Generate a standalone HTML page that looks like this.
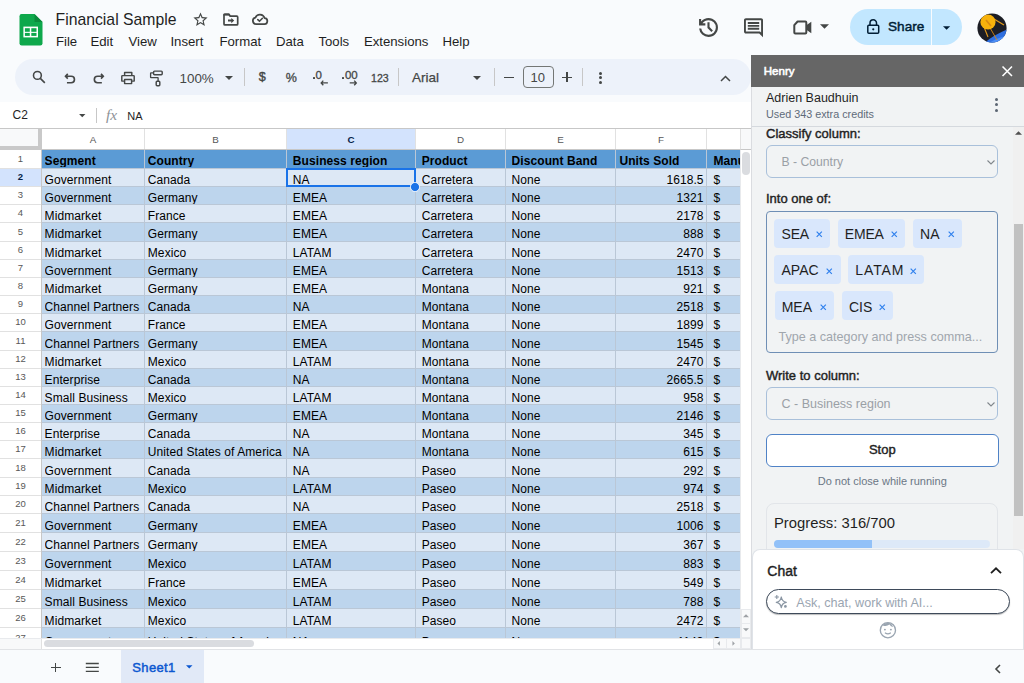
<!DOCTYPE html><html><head><meta charset="utf-8"><style>
*{box-sizing:border-box}
html,body{margin:0;padding:0}
body{width:1024px;height:683px;overflow:hidden;position:relative;background:#f9fbfd;font-family:"Liberation Sans",sans-serif;color:#1f1f1f}
.a{position:absolute;white-space:nowrap}
.t{position:absolute;white-space:nowrap;line-height:1}
svg{position:absolute;overflow:visible}
</style></head><body>
<svg style="left:19px;top:14px" width="24" height="32" viewBox="0 0 24 32">
<path d="M2.5 0H15.5L23.5 8V29.3Q23.5 31.5 21.3 31.5H2.7Q0.5 31.5 0.5 29.3V2.2Q0.5 0 2.5 0Z" fill="#0ea84c"/>
<path d="M15.5 0L23.5 8H15.5Z" fill="#0b8a3c"/>
<rect x="4.4" y="12.6" width="14.6" height="10.8" fill="#fff"/>
<rect x="5.9" y="14.2" width="4.9" height="3.6" fill="#0ea84c"/><rect x="12.3" y="14.2" width="5.2" height="3.6" fill="#0ea84c"/>
<rect x="5.9" y="18.9" width="4.9" height="3.0" fill="#0ea84c"/><rect x="12.3" y="18.9" width="5.2" height="3.0" fill="#0ea84c"/>
</svg><div class="t" style="left:55.6px;top:11.6px;font-size:15.75px;color:#1f1f1f">Financial Sample</div><svg style="left:192.4px;top:11.3px" width="17" height="17" viewBox="0 0 24 24"><path fill="#444746" d="M22 9.24l-7.19-.62L12 2 9.19 8.63 2 9.24l5.46 4.73L5.82 21 12 17.27 18.18 21l-1.63-7.03L22 9.24zM12 15.4l-3.76 2.27 1-4.28-3.32-2.88 4.38-.38L12 6.1l1.71 4.04 4.38.38-3.32 2.88 1 4.28L12 15.4z"/></svg><svg style="left:220px;top:10px" width="22" height="18" viewBox="220 10 22 18"><path fill="none" stroke="#444746" stroke-width="1.7" stroke-linejoin="round" d="M224 15.2V23.9Q224 24.9 225 24.9H236.8Q237.7 24.9 237.7 23.9V17.2Q237.7 16.2 236.8 16.2H230.2L228.8 14.3H225Q224 14.3 224 15.2Z"/><path fill="#444746" d="M223.3 14.5Q223.3 13.5 224.3 13.5H229.2L230.8 15.4H223.3Z"/><path fill="#444746" d="M228 19.6H231.3V17.9L234.2 20.6L231.3 23.3V21.6H228Z"/></svg><svg style="left:250px;top:10px" width="20" height="18" viewBox="250 10 20 18"><path fill="none" stroke="#444746" stroke-width="1.75" stroke-linejoin="round" d="M256 24.1H264A3 3 0 0 0 264.6 18.1A4.9 4.9 0 0 0 255.4 17.6A3.3 3.3 0 0 0 256 24.1Z"/><path fill="none" stroke="#444746" stroke-width="1.6" d="M257.8 19.6L259.5 21.2L262.4 18.3" stroke-linecap="round"/></svg><div class="t" style="left:55.9px;top:34.6px;font-size:13.2px;color:#1f1f1f">File</div><div class="t" style="left:90.4px;top:34.6px;font-size:13.2px;color:#1f1f1f">Edit</div><div class="t" style="left:128.4px;top:34.6px;font-size:13.2px;color:#1f1f1f">View</div><div class="t" style="left:170.4px;top:34.6px;font-size:13.2px;color:#1f1f1f">Insert</div><div class="t" style="left:219.4px;top:34.6px;font-size:13.2px;color:#1f1f1f">Format</div><div class="t" style="left:275.9px;top:34.6px;font-size:13.2px;color:#1f1f1f">Data</div><div class="t" style="left:318.4px;top:34.6px;font-size:13.2px;color:#1f1f1f">Tools</div><div class="t" style="left:363.9px;top:34.6px;font-size:13.2px;color:#1f1f1f">Extensions</div><div class="t" style="left:442.4px;top:34.6px;font-size:13.2px;color:#1f1f1f">Help</div><svg style="left:697.6px;top:16.5px" width="21" height="21" viewBox="80 -880 800 800"><path fill="#444746" d="M480-120q-138 0-240.5-91.5T122-440h82q14 104 92.5 172T480-200q117 0 198.5-81.5T760-480q0-117-81.5-198.5T480-760q-69 0-129 32t-101 88h110v80H120v-240h80v94q51-64 124.5-99T480-840q75 0 140.5 28.5t114 77q48.5 48.5 77 114T840-480q0 75-28.5 140.5t-77 114q-48.5 48.5-114 77T480-120Zm112-192L440-464v-216h80v184l128 128-56 56Z"/></svg><svg style="left:743.8px;top:18px" width="19" height="19.5" viewBox="80 -880 800 800"><path fill="#444746" d="M240-400h480v-80H240v80Zm0-120h480v-80H240v80Zm0-120h480v-80H240v80ZM880-80 720-240H160q-33 0-56.5-23.5T80-320v-480q0-33 23.5-56.5T160-880h640q33 0 56.5 23.5T880-800v720ZM160-320h594l46 45v-525H160v480Zm0 0v-480 480Z"/></svg><svg style="left:793px;top:20px" width="19" height="15" viewBox="0 0 19 15"><path fill="none" stroke="#444746" stroke-width="2" stroke-linejoin="round" d="M1.3 5.2L4.6 1.5H12.3Q13.3 1.5 13.3 2.5V12.5Q13.3 13.5 12.3 13.5H2.3Q1.3 13.5 1.3 12.5Z"/><path fill="#444746" d="M13 5.5L18.3 1.8V13.2L13 9.5Z"/></svg><svg style="left:820px;top:24px" width="9" height="5" viewBox="0 0 10 5"><path fill="#444746" d="M0 0H10L5 5Z"/></svg><div class="a" style="left:849.5px;top:9.4px;width:112px;height:36px;border-radius:18px;background:#c2e7ff"></div><div class="a" style="left:930.8px;top:9.4px;width:1px;height:36px;background:#f9fbfd"></div><svg style="left:866.5px;top:19px" width="12.5" height="15" viewBox="0 0 12.5 15"><rect x="0.8" y="6.3" width="10.9" height="8" rx="1" fill="none" stroke="#001d35" stroke-width="1.5"/><path fill="none" stroke="#001d35" stroke-width="1.5" d="M3 6.3V4A3.25 3.25 0 0 1 9.5 4V6.3"/><circle cx="6.25" cy="10.3" r="1.1" fill="#001d35"/></svg><div class="t" style="left:888px;top:20.3px;font-size:13.6px;font-weight:400;-webkit-text-stroke:0.45px #001d35;color:#001d35">Share</div><svg style="left:943.2px;top:26px" width="7.2" height="4" viewBox="0 0 10 5"><path fill="#001d35" d="M0 0H10L5 5Z"/></svg><svg style="left:976.5px;top:12.5px" width="30" height="30" viewBox="0 0 30 30">
<defs><clipPath id="av"><circle cx="15" cy="15" r="14.6"/></clipPath></defs>
<g clip-path="url(#av)"><rect width="30" height="30" fill="#1c1d24"/>
<path d="M6 31Q16 22 31 16V31Z" fill="#2f6fe0"/><path d="M10 31Q20 25 31 22V31Z" fill="#4d8ef5"/><path d="M15 31Q22 28 31 27V31Z" fill="#1fa84a"/>
<path d="M12 13L20 27" stroke="#d98a12" stroke-width="0.9"/><path d="M7 14L11 24" stroke="#e39a1a" stroke-width="1.1"/><path d="M17 6L27 12" stroke="#e39a1a" stroke-width="1.3"/>
<circle cx="11" cy="9" r="7.6" fill="#f7b20c"/><path d="M9 7L14 13" stroke="#d98a12" stroke-width="1.6"/></g></svg><div class="a" style="left:15px;top:59px;width:735.5px;height:36px;border-radius:18px;background:#edf2fa"></div><svg style="left:30.6px;top:68.8px" width="16.2" height="16.2" viewBox="0 0 24 24"><circle cx="9.5" cy="9.5" r="5.8" fill="none" stroke="#444746" stroke-width="2.3"/><path d="M13.8 13.8L20.5 20.5" stroke="#444746" stroke-width="2.4"/></svg><svg style="left:64px;top:73.2px" width="11.8" height="11" viewBox="0 0 14 13"><path fill="none" stroke="#444746" stroke-width="1.95" d="M4.5 1L1.8 3.8L4.5 6.6M2 3.8H8.5A3.9 3.9 0 0 1 8.5 11.6H3.5"/></svg><svg style="left:92.8px;top:73.2px" width="11.8" height="11" viewBox="0 0 14 13"><path fill="none" stroke="#444746" stroke-width="1.95" d="M9.5 1L12.2 3.8L9.5 6.6M12 3.8H5.5A3.9 3.9 0 0 0 5.5 11.6H10.5"/></svg><svg style="left:110px;top:62px" width="60" height="30" viewBox="110 62 60 30"><path fill="none" stroke="#444746" stroke-width="1.45" stroke-linejoin="round" d="M124.6 75.6V72.5H131.8V75.6M124.3 81.1H121.8V76.3Q121.8 75.6 122.5 75.6H133.5Q134.2 75.6 134.2 76.3V81.1H131.7M124.6 79.5H131.6V83.6H124.6Z"/>
<rect x="153.6" y="71.1" width="8.6" height="3.6" rx="0.9" fill="none" stroke="#444746" stroke-width="1.45"/><path fill="none" stroke="#444746" stroke-width="1.3" stroke-linejoin="round" d="M153.6 72.9H151Q150.6 72.9 150.6 73.3V77.2Q150.6 77.6 151 77.6H157.8Q158.1 77.6 158.1 77.9V81.1"/><rect x="156.2" y="81.3" width="3.6" height="4.4" rx="0.9" fill="none" stroke="#444746" stroke-width="1.45"/></svg><div class="t" style="left:179.5px;top:71.5px;font-size:13.4px;color:#444746">100%</div><svg style="left:224.5px;top:75.5px" width="8" height="4" viewBox="0 0 10 5"><path fill="#444746" d="M0 0H10L5 5Z"/></svg><div class="a" style="left:244.4px;top:68px;width:1px;height:18px;background:#c7c7c7"></div><div class="t" style="left:258.8px;top:70.5px;font-size:12.6px;-webkit-text-stroke:0.4px #444746;color:#444746">$</div><div class="t" style="left:285.8px;top:72.3px;font-size:12.5px;-webkit-text-stroke:0.3px #444746;color:#444746">%</div><div class="a" style="left:313.1px;top:77.1px;width:1.8px;height:1.9px;border-radius:0.5px;background:#444746"></div><div class="t" style="left:315.6px;top:70.3px;font-size:11.5px;-webkit-text-stroke:0.3px #444746;color:#444746">0</div><svg style="left:320px;top:79.6px" width="9" height="6" viewBox="0 0 9 6"><path fill="none" stroke="#444746" stroke-width="1.35" d="M3.3 0.6L1.2 2.9L3.3 5.2M1.4 2.9H7.9"/></svg><div class="a" style="left:342px;top:77.1px;width:1.8px;height:1.9px;border-radius:0.5px;background:#444746"></div><div class="t" style="left:344.9px;top:70.3px;font-size:11.5px;-webkit-text-stroke:0.3px #444746;color:#444746">00</div><svg style="left:348.8px;top:79.6px" width="9" height="6" viewBox="0 0 9 6"><path fill="none" stroke="#444746" stroke-width="1.35" d="M5.2 0.6L7.3 2.9L5.2 5.2M0.7 2.9H7.1"/></svg><div class="t" style="left:371px;top:72.6px;font-size:10.6px;-webkit-text-stroke:0.3px #444746;color:#444746">123</div><div class="a" style="left:397.6px;top:68px;width:1px;height:18px;background:#c7c7c7"></div><div class="t" style="left:412px;top:70.5px;font-size:13.5px;-webkit-text-stroke:0.25px #444746;color:#444746">Arial</div><svg style="left:472.5px;top:75.5px" width="8" height="4" viewBox="0 0 10 5"><path fill="#444746" d="M0 0H10L5 5Z"/></svg><div class="a" style="left:493.8px;top:68px;width:1px;height:18px;background:#c7c7c7"></div><div class="a" style="left:503.5px;top:76.5px;width:10px;height:1.6px;background:#444746"></div><div class="a" style="left:523px;top:66.4px;width:30.7px;height:21.6px;border:1px solid #747775;border-radius:4px"></div><div class="t" style="left:530.5px;top:70.6px;font-size:13px;color:#444746">10</div><div class="a" style="left:561.8px;top:76.5px;width:10px;height:1.6px;background:#444746"></div><div class="a" style="left:566px;top:72.3px;width:1.6px;height:10px;background:#444746"></div><div class="a" style="left:581.8px;top:68px;width:1px;height:18px;background:#c7c7c7"></div><div class="a" style="left:598.8px;top:71.9px;width:3px;height:3px;border-radius:50%;background:#444746"></div><div class="a" style="left:598.8px;top:76.4px;width:3px;height:3px;border-radius:50%;background:#444746"></div><div class="a" style="left:598.8px;top:80.9px;width:3px;height:3px;border-radius:50%;background:#444746"></div><svg style="left:720px;top:74.6px" width="11" height="7" viewBox="0 0 11 7"><path fill="none" stroke="#444746" stroke-width="1.5" d="M1 6L5.5 1.5L10 6"/></svg><div class="a" style="left:0;top:102px;width:751px;height:26.5px;background:#fff"></div><div class="t" style="left:12.5px;top:109.3px;font-size:12px;color:#1f1f1f">C2</div><svg style="left:78.8px;top:113.5px" width="6.5" height="3.2" viewBox="0 0 10 5"><path fill="#444746" d="M0 0H10L5 5Z"/></svg><div class="a" style="left:96.3px;top:108px;width:1px;height:15px;background:#c7c7c7"></div><div class="t" style="left:106px;top:107.3px;font-size:15.5px;font-style:italic;font-family:'Liberation Serif';color:#8e9398">fx</div><div class="t" style="left:127.3px;top:110.8px;font-size:11px;color:#1f1f1f">NA</div><div class="a" style="left:0;top:128.4px;width:751px;height:520.6px;background:#fff;overflow:hidden"><div class="a" style="left:0;top:0;width:751px;height:1px;background:#c7c7c7"></div><div class="a" style="left:0;top:740.2px;width:0;height:0"></div><div class="a" style="left:0;top:0;width:740.2px;height:509.3px;overflow:hidden"><div class="a" style="left:42px;top:1px;width:102px;height:19.6px;background:#fff"></div><div class="a" style="left:144px;top:1px;width:1px;height:19.6px;background:#e1e1e1"></div><div class="t" style="left:42px;width:102px;text-align:center;top:6.9px;font-size:9.8px;font-weight:400;color:#575757">A</div><div class="a" style="left:145px;top:1px;width:141px;height:19.6px;background:#fff"></div><div class="a" style="left:286px;top:1px;width:1px;height:19.6px;background:#e1e1e1"></div><div class="t" style="left:145px;width:141px;text-align:center;top:6.9px;font-size:9.8px;font-weight:400;color:#575757">B</div><div class="a" style="left:287px;top:1px;width:128px;height:19.6px;background:#d3e3fd"></div><div class="a" style="left:415px;top:1px;width:1px;height:19.6px;background:#e1e1e1"></div><div class="t" style="left:287px;width:128px;text-align:center;top:6.9px;font-size:9.8px;font-weight:700;color:#041e49">C</div><div class="a" style="left:416px;top:1px;width:89px;height:19.6px;background:#fff"></div><div class="a" style="left:505px;top:1px;width:1px;height:19.6px;background:#e1e1e1"></div><div class="t" style="left:416px;width:89px;text-align:center;top:6.9px;font-size:9.8px;font-weight:400;color:#575757">D</div><div class="a" style="left:506px;top:1px;width:109px;height:19.6px;background:#fff"></div><div class="a" style="left:615px;top:1px;width:1px;height:19.6px;background:#e1e1e1"></div><div class="t" style="left:506px;width:109px;text-align:center;top:6.9px;font-size:9.8px;font-weight:400;color:#575757">E</div><div class="a" style="left:616px;top:1px;width:90px;height:19.6px;background:#fff"></div><div class="a" style="left:706px;top:1px;width:1px;height:19.6px;background:#e1e1e1"></div><div class="t" style="left:616px;width:90px;text-align:center;top:6.9px;font-size:9.8px;font-weight:400;color:#575757">F</div><div class="a" style="left:707px;top:1px;width:193px;height:19.6px;background:#fff"></div><div class="a" style="left:900px;top:1px;width:1px;height:19.6px;background:#e1e1e1"></div><div class="t" style="left:707px;width:193px;text-align:center;top:6.9px;font-size:9.8px;font-weight:400;color:#575757">G</div><div class="a" style="left:0;top:20.6px;width:740.2px;height:1px;background:#c7c7c7"></div><div class="a" style="left:0;top:21.6px;width:41px;height:18px;background:#fff"></div><div class="a" style="left:0;top:39.6px;width:41px;height:1px;background:#e1e1e1"></div><div class="t" style="left:0;width:41px;text-align:center;top:25.55px;font-size:9.5px;font-weight:400;color:#575757">1</div><div class="a" style="left:42px;top:21.6px;width:698.2px;height:18px;background:#5b9bd5"></div><div class="a" style="left:41px;top:39.6px;width:699.2px;height:1px;background:#bac7d6"></div><div class="t" style="left:44.6px;width:99.4px;overflow:hidden;top:27.1px;font-size:12px;font-weight:700;color:#000;letter-spacing:0.08px">Segment</div><div class="t" style="left:147.8px;width:138.2px;overflow:hidden;top:27.1px;font-size:12px;font-weight:700;color:#000;letter-spacing:0.08px">Country</div><div class="t" style="left:292.85px;width:122.14999999999998px;overflow:hidden;top:27.1px;font-size:12px;font-weight:700;color:#000;letter-spacing:0.08px">Business region</div><div class="t" style="left:421.7px;width:83.30000000000001px;overflow:hidden;top:27.1px;font-size:12px;font-weight:700;color:#000;letter-spacing:0.08px">Product</div><div class="t" style="left:511.6px;width:103.39999999999998px;overflow:hidden;top:27.1px;font-size:12px;font-weight:700;color:#000;letter-spacing:0.08px">Discount Band</div><div class="t" style="left:619.4px;width:86.6px;overflow:hidden;top:27.1px;font-size:12px;font-weight:700;color:#000;letter-spacing:0.08px">Units Sold</div><div class="t" style="left:713.4px;width:193.60000000000002px;overflow:hidden;top:27.1px;font-size:12px;font-weight:700;color:#000;letter-spacing:0.08px">Manufacturing Price</div><div class="a" style="left:0;top:40.6px;width:41px;height:17px;background:#d3e3fd"></div><div class="a" style="left:0;top:57.6px;width:41px;height:1px;background:#e1e1e1"></div><div class="t" style="left:0;width:41px;text-align:center;top:44.05px;font-size:9.5px;font-weight:700;color:#041e49">2</div><div class="a" style="left:42px;top:40.6px;width:698.2px;height:17px;background:#dde8f5"></div><div class="a" style="left:41px;top:57.6px;width:699.2px;height:1px;background:#bac7d6"></div><div class="t" style="left:44.6px;width:99.4px;overflow:hidden;top:45.4px;font-size:12px;font-weight:400;color:#000;letter-spacing:0.08px">Government</div><div class="t" style="left:147.8px;width:138.2px;overflow:hidden;top:45.4px;font-size:12px;font-weight:400;color:#000;letter-spacing:0.08px">Canada</div><div class="t" style="left:292.85px;width:122.14999999999998px;overflow:hidden;top:45.4px;font-size:12px;font-weight:400;color:#000;letter-spacing:0.08px">NA</div><div class="t" style="left:421.7px;width:83.30000000000001px;overflow:hidden;top:45.4px;font-size:12px;font-weight:400;color:#000;letter-spacing:0.08px">Carretera</div><div class="t" style="left:511.6px;width:103.39999999999998px;overflow:hidden;top:45.4px;font-size:12px;font-weight:400;color:#000;letter-spacing:0.08px">None</div><div class="t" style="left:616px;width:87.60000000000002px;text-align:right;top:45.4px;font-size:12px;font-weight:400;color:#000;letter-spacing:0.08px">1618.5</div><div class="t" style="left:713.4px;width:193.60000000000002px;overflow:hidden;top:45.4px;font-size:12px;font-weight:400;color:#000;letter-spacing:0.08px">$</div><div class="a" style="left:0;top:58.6px;width:41px;height:17px;background:#fff"></div><div class="a" style="left:0;top:75.6px;width:41px;height:1px;background:#e1e1e1"></div><div class="t" style="left:0;width:41px;text-align:center;top:62.05px;font-size:9.5px;font-weight:400;color:#575757">3</div><div class="a" style="left:42px;top:58.6px;width:698.2px;height:17px;background:#bdd5ed"></div><div class="a" style="left:41px;top:75.6px;width:699.2px;height:1px;background:#bac7d6"></div><div class="t" style="left:44.6px;width:99.4px;overflow:hidden;top:63.6px;font-size:12px;font-weight:400;color:#000;letter-spacing:0.08px">Government</div><div class="t" style="left:147.8px;width:138.2px;overflow:hidden;top:63.6px;font-size:12px;font-weight:400;color:#000;letter-spacing:0.08px">Germany</div><div class="t" style="left:292.85px;width:122.14999999999998px;overflow:hidden;top:63.6px;font-size:12px;font-weight:400;color:#000;letter-spacing:0.08px">EMEA</div><div class="t" style="left:421.7px;width:83.30000000000001px;overflow:hidden;top:63.6px;font-size:12px;font-weight:400;color:#000;letter-spacing:0.08px">Carretera</div><div class="t" style="left:511.6px;width:103.39999999999998px;overflow:hidden;top:63.6px;font-size:12px;font-weight:400;color:#000;letter-spacing:0.08px">None</div><div class="t" style="left:616px;width:87.60000000000002px;text-align:right;top:63.6px;font-size:12px;font-weight:400;color:#000;letter-spacing:0.08px">1321</div><div class="t" style="left:713.4px;width:193.60000000000002px;overflow:hidden;top:63.6px;font-size:12px;font-weight:400;color:#000;letter-spacing:0.08px">$</div><div class="a" style="left:0;top:76.6px;width:41px;height:17px;background:#fff"></div><div class="a" style="left:0;top:93.6px;width:41px;height:1px;background:#e1e1e1"></div><div class="t" style="left:0;width:41px;text-align:center;top:80.05px;font-size:9.5px;font-weight:400;color:#575757">4</div><div class="a" style="left:42px;top:76.6px;width:698.2px;height:17px;background:#dde8f5"></div><div class="a" style="left:41px;top:93.6px;width:699.2px;height:1px;background:#bac7d6"></div><div class="t" style="left:44.6px;width:99.4px;overflow:hidden;top:82.0px;font-size:12px;font-weight:400;color:#000;letter-spacing:0.08px">Midmarket</div><div class="t" style="left:147.8px;width:138.2px;overflow:hidden;top:82.0px;font-size:12px;font-weight:400;color:#000;letter-spacing:0.08px">France</div><div class="t" style="left:292.85px;width:122.14999999999998px;overflow:hidden;top:82.0px;font-size:12px;font-weight:400;color:#000;letter-spacing:0.08px">EMEA</div><div class="t" style="left:421.7px;width:83.30000000000001px;overflow:hidden;top:82.0px;font-size:12px;font-weight:400;color:#000;letter-spacing:0.08px">Carretera</div><div class="t" style="left:511.6px;width:103.39999999999998px;overflow:hidden;top:82.0px;font-size:12px;font-weight:400;color:#000;letter-spacing:0.08px">None</div><div class="t" style="left:616px;width:87.60000000000002px;text-align:right;top:82.0px;font-size:12px;font-weight:400;color:#000;letter-spacing:0.08px">2178</div><div class="t" style="left:713.4px;width:193.60000000000002px;overflow:hidden;top:82.0px;font-size:12px;font-weight:400;color:#000;letter-spacing:0.08px">$</div><div class="a" style="left:0;top:94.6px;width:41px;height:18px;background:#fff"></div><div class="a" style="left:0;top:112.6px;width:41px;height:1px;background:#e1e1e1"></div><div class="t" style="left:0;width:41px;text-align:center;top:98.55px;font-size:9.5px;font-weight:400;color:#575757">5</div><div class="a" style="left:42px;top:94.6px;width:698.2px;height:18px;background:#bdd5ed"></div><div class="a" style="left:41px;top:112.6px;width:699.2px;height:1px;background:#bac7d6"></div><div class="t" style="left:44.6px;width:99.4px;overflow:hidden;top:100.1px;font-size:12px;font-weight:400;color:#000;letter-spacing:0.08px">Midmarket</div><div class="t" style="left:147.8px;width:138.2px;overflow:hidden;top:100.1px;font-size:12px;font-weight:400;color:#000;letter-spacing:0.08px">Germany</div><div class="t" style="left:292.85px;width:122.14999999999998px;overflow:hidden;top:100.1px;font-size:12px;font-weight:400;color:#000;letter-spacing:0.08px">EMEA</div><div class="t" style="left:421.7px;width:83.30000000000001px;overflow:hidden;top:100.1px;font-size:12px;font-weight:400;color:#000;letter-spacing:0.08px">Carretera</div><div class="t" style="left:511.6px;width:103.39999999999998px;overflow:hidden;top:100.1px;font-size:12px;font-weight:400;color:#000;letter-spacing:0.08px">None</div><div class="t" style="left:616px;width:87.60000000000002px;text-align:right;top:100.1px;font-size:12px;font-weight:400;color:#000;letter-spacing:0.08px">888</div><div class="t" style="left:713.4px;width:193.60000000000002px;overflow:hidden;top:100.1px;font-size:12px;font-weight:400;color:#000;letter-spacing:0.08px">$</div><div class="a" style="left:0;top:113.6px;width:41px;height:17px;background:#fff"></div><div class="a" style="left:0;top:130.6px;width:41px;height:1px;background:#e1e1e1"></div><div class="t" style="left:0;width:41px;text-align:center;top:117.05px;font-size:9.5px;font-weight:400;color:#575757">6</div><div class="a" style="left:42px;top:113.6px;width:698.2px;height:17px;background:#dde8f5"></div><div class="a" style="left:41px;top:130.6px;width:699.2px;height:1px;background:#bac7d6"></div><div class="t" style="left:44.6px;width:99.4px;overflow:hidden;top:118.4px;font-size:12px;font-weight:400;color:#000;letter-spacing:0.08px">Midmarket</div><div class="t" style="left:147.8px;width:138.2px;overflow:hidden;top:118.4px;font-size:12px;font-weight:400;color:#000;letter-spacing:0.08px">Mexico</div><div class="t" style="left:292.85px;width:122.14999999999998px;overflow:hidden;top:118.4px;font-size:12px;font-weight:400;color:#000;letter-spacing:0.08px">LATAM</div><div class="t" style="left:421.7px;width:83.30000000000001px;overflow:hidden;top:118.4px;font-size:12px;font-weight:400;color:#000;letter-spacing:0.08px">Carretera</div><div class="t" style="left:511.6px;width:103.39999999999998px;overflow:hidden;top:118.4px;font-size:12px;font-weight:400;color:#000;letter-spacing:0.08px">None</div><div class="t" style="left:616px;width:87.60000000000002px;text-align:right;top:118.4px;font-size:12px;font-weight:400;color:#000;letter-spacing:0.08px">2470</div><div class="t" style="left:713.4px;width:193.60000000000002px;overflow:hidden;top:118.4px;font-size:12px;font-weight:400;color:#000;letter-spacing:0.08px">$</div><div class="a" style="left:0;top:131.6px;width:41px;height:17px;background:#fff"></div><div class="a" style="left:0;top:148.6px;width:41px;height:1px;background:#e1e1e1"></div><div class="t" style="left:0;width:41px;text-align:center;top:135.05px;font-size:9.5px;font-weight:400;color:#575757">7</div><div class="a" style="left:42px;top:131.6px;width:698.2px;height:17px;background:#bdd5ed"></div><div class="a" style="left:41px;top:148.6px;width:699.2px;height:1px;background:#bac7d6"></div><div class="t" style="left:44.6px;width:99.4px;overflow:hidden;top:136.6px;font-size:12px;font-weight:400;color:#000;letter-spacing:0.08px">Government</div><div class="t" style="left:147.8px;width:138.2px;overflow:hidden;top:136.6px;font-size:12px;font-weight:400;color:#000;letter-spacing:0.08px">Germany</div><div class="t" style="left:292.85px;width:122.14999999999998px;overflow:hidden;top:136.6px;font-size:12px;font-weight:400;color:#000;letter-spacing:0.08px">EMEA</div><div class="t" style="left:421.7px;width:83.30000000000001px;overflow:hidden;top:136.6px;font-size:12px;font-weight:400;color:#000;letter-spacing:0.08px">Carretera</div><div class="t" style="left:511.6px;width:103.39999999999998px;overflow:hidden;top:136.6px;font-size:12px;font-weight:400;color:#000;letter-spacing:0.08px">None</div><div class="t" style="left:616px;width:87.60000000000002px;text-align:right;top:136.6px;font-size:12px;font-weight:400;color:#000;letter-spacing:0.08px">1513</div><div class="t" style="left:713.4px;width:193.60000000000002px;overflow:hidden;top:136.6px;font-size:12px;font-weight:400;color:#000;letter-spacing:0.08px">$</div><div class="a" style="left:0;top:149.6px;width:41px;height:17px;background:#fff"></div><div class="a" style="left:0;top:166.6px;width:41px;height:1px;background:#e1e1e1"></div><div class="t" style="left:0;width:41px;text-align:center;top:153.05px;font-size:9.5px;font-weight:400;color:#575757">8</div><div class="a" style="left:42px;top:149.6px;width:698.2px;height:17px;background:#dde8f5"></div><div class="a" style="left:41px;top:166.6px;width:699.2px;height:1px;background:#bac7d6"></div><div class="t" style="left:44.6px;width:99.4px;overflow:hidden;top:154.5px;font-size:12px;font-weight:400;color:#000;letter-spacing:0.08px">Midmarket</div><div class="t" style="left:147.8px;width:138.2px;overflow:hidden;top:154.5px;font-size:12px;font-weight:400;color:#000;letter-spacing:0.08px">Germany</div><div class="t" style="left:292.85px;width:122.14999999999998px;overflow:hidden;top:154.5px;font-size:12px;font-weight:400;color:#000;letter-spacing:0.08px">EMEA</div><div class="t" style="left:421.7px;width:83.30000000000001px;overflow:hidden;top:154.5px;font-size:12px;font-weight:400;color:#000;letter-spacing:0.08px">Montana</div><div class="t" style="left:511.6px;width:103.39999999999998px;overflow:hidden;top:154.5px;font-size:12px;font-weight:400;color:#000;letter-spacing:0.08px">None</div><div class="t" style="left:616px;width:87.60000000000002px;text-align:right;top:154.5px;font-size:12px;font-weight:400;color:#000;letter-spacing:0.08px">921</div><div class="t" style="left:713.4px;width:193.60000000000002px;overflow:hidden;top:154.5px;font-size:12px;font-weight:400;color:#000;letter-spacing:0.08px">$</div><div class="a" style="left:0;top:167.6px;width:41px;height:17px;background:#fff"></div><div class="a" style="left:0;top:184.6px;width:41px;height:1px;background:#e1e1e1"></div><div class="t" style="left:0;width:41px;text-align:center;top:171.05px;font-size:9.5px;font-weight:400;color:#575757">9</div><div class="a" style="left:42px;top:167.6px;width:698.2px;height:17px;background:#bdd5ed"></div><div class="a" style="left:41px;top:184.6px;width:699.2px;height:1px;background:#bac7d6"></div><div class="t" style="left:44.6px;width:99.4px;overflow:hidden;top:173.0px;font-size:12px;font-weight:400;color:#000;letter-spacing:0.08px">Channel Partners</div><div class="t" style="left:147.8px;width:138.2px;overflow:hidden;top:173.0px;font-size:12px;font-weight:400;color:#000;letter-spacing:0.08px">Canada</div><div class="t" style="left:292.85px;width:122.14999999999998px;overflow:hidden;top:173.0px;font-size:12px;font-weight:400;color:#000;letter-spacing:0.08px">NA</div><div class="t" style="left:421.7px;width:83.30000000000001px;overflow:hidden;top:173.0px;font-size:12px;font-weight:400;color:#000;letter-spacing:0.08px">Montana</div><div class="t" style="left:511.6px;width:103.39999999999998px;overflow:hidden;top:173.0px;font-size:12px;font-weight:400;color:#000;letter-spacing:0.08px">None</div><div class="t" style="left:616px;width:87.60000000000002px;text-align:right;top:173.0px;font-size:12px;font-weight:400;color:#000;letter-spacing:0.08px">2518</div><div class="t" style="left:713.4px;width:193.60000000000002px;overflow:hidden;top:173.0px;font-size:12px;font-weight:400;color:#000;letter-spacing:0.08px">$</div><div class="a" style="left:0;top:185.6px;width:41px;height:17px;background:#fff"></div><div class="a" style="left:0;top:202.6px;width:41px;height:1px;background:#e1e1e1"></div><div class="t" style="left:0;width:41px;text-align:center;top:189.05px;font-size:9.5px;font-weight:400;color:#575757">10</div><div class="a" style="left:42px;top:185.6px;width:698.2px;height:17px;background:#dde8f5"></div><div class="a" style="left:41px;top:202.6px;width:699.2px;height:1px;background:#bac7d6"></div><div class="t" style="left:44.6px;width:99.4px;overflow:hidden;top:191.0px;font-size:12px;font-weight:400;color:#000;letter-spacing:0.08px">Government</div><div class="t" style="left:147.8px;width:138.2px;overflow:hidden;top:191.0px;font-size:12px;font-weight:400;color:#000;letter-spacing:0.08px">France</div><div class="t" style="left:292.85px;width:122.14999999999998px;overflow:hidden;top:191.0px;font-size:12px;font-weight:400;color:#000;letter-spacing:0.08px">EMEA</div><div class="t" style="left:421.7px;width:83.30000000000001px;overflow:hidden;top:191.0px;font-size:12px;font-weight:400;color:#000;letter-spacing:0.08px">Montana</div><div class="t" style="left:511.6px;width:103.39999999999998px;overflow:hidden;top:191.0px;font-size:12px;font-weight:400;color:#000;letter-spacing:0.08px">None</div><div class="t" style="left:616px;width:87.60000000000002px;text-align:right;top:191.0px;font-size:12px;font-weight:400;color:#000;letter-spacing:0.08px">1899</div><div class="t" style="left:713.4px;width:193.60000000000002px;overflow:hidden;top:191.0px;font-size:12px;font-weight:400;color:#000;letter-spacing:0.08px">$</div><div class="a" style="left:0;top:203.6px;width:41px;height:18px;background:#fff"></div><div class="a" style="left:0;top:221.6px;width:41px;height:1px;background:#e1e1e1"></div><div class="t" style="left:0;width:41px;text-align:center;top:207.55px;font-size:9.5px;font-weight:400;color:#575757">11</div><div class="a" style="left:42px;top:203.6px;width:698.2px;height:18px;background:#bdd5ed"></div><div class="a" style="left:41px;top:221.6px;width:699.2px;height:1px;background:#bac7d6"></div><div class="t" style="left:44.6px;width:99.4px;overflow:hidden;top:209.3px;font-size:12px;font-weight:400;color:#000;letter-spacing:0.08px">Channel Partners</div><div class="t" style="left:147.8px;width:138.2px;overflow:hidden;top:209.3px;font-size:12px;font-weight:400;color:#000;letter-spacing:0.08px">Germany</div><div class="t" style="left:292.85px;width:122.14999999999998px;overflow:hidden;top:209.3px;font-size:12px;font-weight:400;color:#000;letter-spacing:0.08px">EMEA</div><div class="t" style="left:421.7px;width:83.30000000000001px;overflow:hidden;top:209.3px;font-size:12px;font-weight:400;color:#000;letter-spacing:0.08px">Montana</div><div class="t" style="left:511.6px;width:103.39999999999998px;overflow:hidden;top:209.3px;font-size:12px;font-weight:400;color:#000;letter-spacing:0.08px">None</div><div class="t" style="left:616px;width:87.60000000000002px;text-align:right;top:209.3px;font-size:12px;font-weight:400;color:#000;letter-spacing:0.08px">1545</div><div class="t" style="left:713.4px;width:193.60000000000002px;overflow:hidden;top:209.3px;font-size:12px;font-weight:400;color:#000;letter-spacing:0.08px">$</div><div class="a" style="left:0;top:222.6px;width:41px;height:17px;background:#fff"></div><div class="a" style="left:0;top:239.6px;width:41px;height:1px;background:#e1e1e1"></div><div class="t" style="left:0;width:41px;text-align:center;top:226.05px;font-size:9.5px;font-weight:400;color:#575757">12</div><div class="a" style="left:42px;top:222.6px;width:698.2px;height:17px;background:#dde8f5"></div><div class="a" style="left:41px;top:239.6px;width:699.2px;height:1px;background:#bac7d6"></div><div class="t" style="left:44.6px;width:99.4px;overflow:hidden;top:227.6px;font-size:12px;font-weight:400;color:#000;letter-spacing:0.08px">Midmarket</div><div class="t" style="left:147.8px;width:138.2px;overflow:hidden;top:227.6px;font-size:12px;font-weight:400;color:#000;letter-spacing:0.08px">Mexico</div><div class="t" style="left:292.85px;width:122.14999999999998px;overflow:hidden;top:227.6px;font-size:12px;font-weight:400;color:#000;letter-spacing:0.08px">LATAM</div><div class="t" style="left:421.7px;width:83.30000000000001px;overflow:hidden;top:227.6px;font-size:12px;font-weight:400;color:#000;letter-spacing:0.08px">Montana</div><div class="t" style="left:511.6px;width:103.39999999999998px;overflow:hidden;top:227.6px;font-size:12px;font-weight:400;color:#000;letter-spacing:0.08px">None</div><div class="t" style="left:616px;width:87.60000000000002px;text-align:right;top:227.6px;font-size:12px;font-weight:400;color:#000;letter-spacing:0.08px">2470</div><div class="t" style="left:713.4px;width:193.60000000000002px;overflow:hidden;top:227.6px;font-size:12px;font-weight:400;color:#000;letter-spacing:0.08px">$</div><div class="a" style="left:0;top:240.6px;width:41px;height:17px;background:#fff"></div><div class="a" style="left:0;top:257.6px;width:41px;height:1px;background:#e1e1e1"></div><div class="t" style="left:0;width:41px;text-align:center;top:244.05px;font-size:9.5px;font-weight:400;color:#575757">13</div><div class="a" style="left:42px;top:240.6px;width:698.2px;height:17px;background:#bdd5ed"></div><div class="a" style="left:41px;top:257.6px;width:699.2px;height:1px;background:#bac7d6"></div><div class="t" style="left:44.6px;width:99.4px;overflow:hidden;top:245.4px;font-size:12px;font-weight:400;color:#000;letter-spacing:0.08px">Enterprise</div><div class="t" style="left:147.8px;width:138.2px;overflow:hidden;top:245.4px;font-size:12px;font-weight:400;color:#000;letter-spacing:0.08px">Canada</div><div class="t" style="left:292.85px;width:122.14999999999998px;overflow:hidden;top:245.4px;font-size:12px;font-weight:400;color:#000;letter-spacing:0.08px">NA</div><div class="t" style="left:421.7px;width:83.30000000000001px;overflow:hidden;top:245.4px;font-size:12px;font-weight:400;color:#000;letter-spacing:0.08px">Montana</div><div class="t" style="left:511.6px;width:103.39999999999998px;overflow:hidden;top:245.4px;font-size:12px;font-weight:400;color:#000;letter-spacing:0.08px">None</div><div class="t" style="left:616px;width:87.60000000000002px;text-align:right;top:245.4px;font-size:12px;font-weight:400;color:#000;letter-spacing:0.08px">2665.5</div><div class="t" style="left:713.4px;width:193.60000000000002px;overflow:hidden;top:245.4px;font-size:12px;font-weight:400;color:#000;letter-spacing:0.08px">$</div><div class="a" style="left:0;top:258.6px;width:41px;height:17px;background:#fff"></div><div class="a" style="left:0;top:275.6px;width:41px;height:1px;background:#e1e1e1"></div><div class="t" style="left:0;width:41px;text-align:center;top:262.05px;font-size:9.5px;font-weight:400;color:#575757">14</div><div class="a" style="left:42px;top:258.6px;width:698.2px;height:17px;background:#dde8f5"></div><div class="a" style="left:41px;top:275.6px;width:699.2px;height:1px;background:#bac7d6"></div><div class="t" style="left:44.6px;width:99.4px;overflow:hidden;top:263.3px;font-size:12px;font-weight:400;color:#000;letter-spacing:0.08px">Small Business</div><div class="t" style="left:147.8px;width:138.2px;overflow:hidden;top:263.3px;font-size:12px;font-weight:400;color:#000;letter-spacing:0.08px">Mexico</div><div class="t" style="left:292.85px;width:122.14999999999998px;overflow:hidden;top:263.3px;font-size:12px;font-weight:400;color:#000;letter-spacing:0.08px">LATAM</div><div class="t" style="left:421.7px;width:83.30000000000001px;overflow:hidden;top:263.3px;font-size:12px;font-weight:400;color:#000;letter-spacing:0.08px">Montana</div><div class="t" style="left:511.6px;width:103.39999999999998px;overflow:hidden;top:263.3px;font-size:12px;font-weight:400;color:#000;letter-spacing:0.08px">None</div><div class="t" style="left:616px;width:87.60000000000002px;text-align:right;top:263.3px;font-size:12px;font-weight:400;color:#000;letter-spacing:0.08px">958</div><div class="t" style="left:713.4px;width:193.60000000000002px;overflow:hidden;top:263.3px;font-size:12px;font-weight:400;color:#000;letter-spacing:0.08px">$</div><div class="a" style="left:0;top:276.6px;width:41px;height:17px;background:#fff"></div><div class="a" style="left:0;top:293.6px;width:41px;height:1px;background:#e1e1e1"></div><div class="t" style="left:0;width:41px;text-align:center;top:280.05px;font-size:9.5px;font-weight:400;color:#575757">15</div><div class="a" style="left:42px;top:276.6px;width:698.2px;height:17px;background:#bdd5ed"></div><div class="a" style="left:41px;top:293.6px;width:699.2px;height:1px;background:#bac7d6"></div><div class="t" style="left:44.6px;width:99.4px;overflow:hidden;top:281.5px;font-size:12px;font-weight:400;color:#000;letter-spacing:0.08px">Government</div><div class="t" style="left:147.8px;width:138.2px;overflow:hidden;top:281.5px;font-size:12px;font-weight:400;color:#000;letter-spacing:0.08px">Germany</div><div class="t" style="left:292.85px;width:122.14999999999998px;overflow:hidden;top:281.5px;font-size:12px;font-weight:400;color:#000;letter-spacing:0.08px">EMEA</div><div class="t" style="left:421.7px;width:83.30000000000001px;overflow:hidden;top:281.5px;font-size:12px;font-weight:400;color:#000;letter-spacing:0.08px">Montana</div><div class="t" style="left:511.6px;width:103.39999999999998px;overflow:hidden;top:281.5px;font-size:12px;font-weight:400;color:#000;letter-spacing:0.08px">None</div><div class="t" style="left:616px;width:87.60000000000002px;text-align:right;top:281.5px;font-size:12px;font-weight:400;color:#000;letter-spacing:0.08px">2146</div><div class="t" style="left:713.4px;width:193.60000000000002px;overflow:hidden;top:281.5px;font-size:12px;font-weight:400;color:#000;letter-spacing:0.08px">$</div><div class="a" style="left:0;top:294.6px;width:41px;height:17px;background:#fff"></div><div class="a" style="left:0;top:311.6px;width:41px;height:1px;background:#e1e1e1"></div><div class="t" style="left:0;width:41px;text-align:center;top:298.05px;font-size:9.5px;font-weight:400;color:#575757">16</div><div class="a" style="left:42px;top:294.6px;width:698.2px;height:17px;background:#dde8f5"></div><div class="a" style="left:41px;top:311.6px;width:699.2px;height:1px;background:#bac7d6"></div><div class="t" style="left:44.6px;width:99.4px;overflow:hidden;top:299.8px;font-size:12px;font-weight:400;color:#000;letter-spacing:0.08px">Enterprise</div><div class="t" style="left:147.8px;width:138.2px;overflow:hidden;top:299.8px;font-size:12px;font-weight:400;color:#000;letter-spacing:0.08px">Canada</div><div class="t" style="left:292.85px;width:122.14999999999998px;overflow:hidden;top:299.8px;font-size:12px;font-weight:400;color:#000;letter-spacing:0.08px">NA</div><div class="t" style="left:421.7px;width:83.30000000000001px;overflow:hidden;top:299.8px;font-size:12px;font-weight:400;color:#000;letter-spacing:0.08px">Montana</div><div class="t" style="left:511.6px;width:103.39999999999998px;overflow:hidden;top:299.8px;font-size:12px;font-weight:400;color:#000;letter-spacing:0.08px">None</div><div class="t" style="left:616px;width:87.60000000000002px;text-align:right;top:299.8px;font-size:12px;font-weight:400;color:#000;letter-spacing:0.08px">345</div><div class="t" style="left:713.4px;width:193.60000000000002px;overflow:hidden;top:299.8px;font-size:12px;font-weight:400;color:#000;letter-spacing:0.08px">$</div><div class="a" style="left:0;top:312.6px;width:41px;height:17px;background:#fff"></div><div class="a" style="left:0;top:329.6px;width:41px;height:1px;background:#e1e1e1"></div><div class="t" style="left:0;width:41px;text-align:center;top:316.05px;font-size:9.5px;font-weight:400;color:#575757">17</div><div class="a" style="left:42px;top:312.6px;width:698.2px;height:17px;background:#bdd5ed"></div><div class="a" style="left:41px;top:329.6px;width:699.2px;height:1px;background:#bac7d6"></div><div class="t" style="left:44.6px;width:99.4px;overflow:hidden;top:318.0px;font-size:12px;font-weight:400;color:#000;letter-spacing:0.08px">Midmarket</div><div class="t" style="left:147.8px;width:138.2px;overflow:hidden;top:318.0px;font-size:12px;font-weight:400;color:#000;letter-spacing:0.08px">United States of America</div><div class="t" style="left:292.85px;width:122.14999999999998px;overflow:hidden;top:318.0px;font-size:12px;font-weight:400;color:#000;letter-spacing:0.08px">NA</div><div class="t" style="left:421.7px;width:83.30000000000001px;overflow:hidden;top:318.0px;font-size:12px;font-weight:400;color:#000;letter-spacing:0.08px">Montana</div><div class="t" style="left:511.6px;width:103.39999999999998px;overflow:hidden;top:318.0px;font-size:12px;font-weight:400;color:#000;letter-spacing:0.08px">None</div><div class="t" style="left:616px;width:87.60000000000002px;text-align:right;top:318.0px;font-size:12px;font-weight:400;color:#000;letter-spacing:0.08px">615</div><div class="t" style="left:713.4px;width:193.60000000000002px;overflow:hidden;top:318.0px;font-size:12px;font-weight:400;color:#000;letter-spacing:0.08px">$</div><div class="a" style="left:0;top:330.6px;width:41px;height:18px;background:#fff"></div><div class="a" style="left:0;top:348.6px;width:41px;height:1px;background:#e1e1e1"></div><div class="t" style="left:0;width:41px;text-align:center;top:334.55px;font-size:9.5px;font-weight:400;color:#575757">18</div><div class="a" style="left:42px;top:330.6px;width:698.2px;height:18px;background:#dde8f5"></div><div class="a" style="left:41px;top:348.6px;width:699.2px;height:1px;background:#bac7d6"></div><div class="t" style="left:44.6px;width:99.4px;overflow:hidden;top:336.55px;font-size:12px;font-weight:400;color:#000;letter-spacing:0.08px">Government</div><div class="t" style="left:147.8px;width:138.2px;overflow:hidden;top:336.55px;font-size:12px;font-weight:400;color:#000;letter-spacing:0.08px">Canada</div><div class="t" style="left:292.85px;width:122.14999999999998px;overflow:hidden;top:336.55px;font-size:12px;font-weight:400;color:#000;letter-spacing:0.08px">NA</div><div class="t" style="left:421.7px;width:83.30000000000001px;overflow:hidden;top:336.55px;font-size:12px;font-weight:400;color:#000;letter-spacing:0.08px">Paseo</div><div class="t" style="left:511.6px;width:103.39999999999998px;overflow:hidden;top:336.55px;font-size:12px;font-weight:400;color:#000;letter-spacing:0.08px">None</div><div class="t" style="left:616px;width:87.60000000000002px;text-align:right;top:336.55px;font-size:12px;font-weight:400;color:#000;letter-spacing:0.08px">292</div><div class="t" style="left:713.4px;width:193.60000000000002px;overflow:hidden;top:336.55px;font-size:12px;font-weight:400;color:#000;letter-spacing:0.08px">$</div><div class="a" style="left:0;top:349.6px;width:41px;height:17px;background:#fff"></div><div class="a" style="left:0;top:366.6px;width:41px;height:1px;background:#e1e1e1"></div><div class="t" style="left:0;width:41px;text-align:center;top:353.05px;font-size:9.5px;font-weight:400;color:#575757">19</div><div class="a" style="left:42px;top:349.6px;width:698.2px;height:17px;background:#bdd5ed"></div><div class="a" style="left:41px;top:366.6px;width:699.2px;height:1px;background:#bac7d6"></div><div class="t" style="left:44.6px;width:99.4px;overflow:hidden;top:354.5px;font-size:12px;font-weight:400;color:#000;letter-spacing:0.08px">Midmarket</div><div class="t" style="left:147.8px;width:138.2px;overflow:hidden;top:354.5px;font-size:12px;font-weight:400;color:#000;letter-spacing:0.08px">Mexico</div><div class="t" style="left:292.85px;width:122.14999999999998px;overflow:hidden;top:354.5px;font-size:12px;font-weight:400;color:#000;letter-spacing:0.08px">LATAM</div><div class="t" style="left:421.7px;width:83.30000000000001px;overflow:hidden;top:354.5px;font-size:12px;font-weight:400;color:#000;letter-spacing:0.08px">Paseo</div><div class="t" style="left:511.6px;width:103.39999999999998px;overflow:hidden;top:354.5px;font-size:12px;font-weight:400;color:#000;letter-spacing:0.08px">None</div><div class="t" style="left:616px;width:87.60000000000002px;text-align:right;top:354.5px;font-size:12px;font-weight:400;color:#000;letter-spacing:0.08px">974</div><div class="t" style="left:713.4px;width:193.60000000000002px;overflow:hidden;top:354.5px;font-size:12px;font-weight:400;color:#000;letter-spacing:0.08px">$</div><div class="a" style="left:0;top:367.6px;width:41px;height:17px;background:#fff"></div><div class="a" style="left:0;top:384.6px;width:41px;height:1px;background:#e1e1e1"></div><div class="t" style="left:0;width:41px;text-align:center;top:371.05px;font-size:9.5px;font-weight:400;color:#575757">20</div><div class="a" style="left:42px;top:367.6px;width:698.2px;height:17px;background:#dde8f5"></div><div class="a" style="left:41px;top:384.6px;width:699.2px;height:1px;background:#bac7d6"></div><div class="t" style="left:44.6px;width:99.4px;overflow:hidden;top:372.4px;font-size:12px;font-weight:400;color:#000;letter-spacing:0.08px">Channel Partners</div><div class="t" style="left:147.8px;width:138.2px;overflow:hidden;top:372.4px;font-size:12px;font-weight:400;color:#000;letter-spacing:0.08px">Canada</div><div class="t" style="left:292.85px;width:122.14999999999998px;overflow:hidden;top:372.4px;font-size:12px;font-weight:400;color:#000;letter-spacing:0.08px">NA</div><div class="t" style="left:421.7px;width:83.30000000000001px;overflow:hidden;top:372.4px;font-size:12px;font-weight:400;color:#000;letter-spacing:0.08px">Paseo</div><div class="t" style="left:511.6px;width:103.39999999999998px;overflow:hidden;top:372.4px;font-size:12px;font-weight:400;color:#000;letter-spacing:0.08px">None</div><div class="t" style="left:616px;width:87.60000000000002px;text-align:right;top:372.4px;font-size:12px;font-weight:400;color:#000;letter-spacing:0.08px">2518</div><div class="t" style="left:713.4px;width:193.60000000000002px;overflow:hidden;top:372.4px;font-size:12px;font-weight:400;color:#000;letter-spacing:0.08px">$</div><div class="a" style="left:0;top:385.6px;width:41px;height:18px;background:#fff"></div><div class="a" style="left:0;top:403.6px;width:41px;height:1px;background:#e1e1e1"></div><div class="t" style="left:0;width:41px;text-align:center;top:389.55px;font-size:9.5px;font-weight:400;color:#575757">21</div><div class="a" style="left:42px;top:385.6px;width:698.2px;height:18px;background:#bdd5ed"></div><div class="a" style="left:41px;top:403.6px;width:699.2px;height:1px;background:#bac7d6"></div><div class="t" style="left:44.6px;width:99.4px;overflow:hidden;top:391.4px;font-size:12px;font-weight:400;color:#000;letter-spacing:0.08px">Government</div><div class="t" style="left:147.8px;width:138.2px;overflow:hidden;top:391.4px;font-size:12px;font-weight:400;color:#000;letter-spacing:0.08px">Germany</div><div class="t" style="left:292.85px;width:122.14999999999998px;overflow:hidden;top:391.4px;font-size:12px;font-weight:400;color:#000;letter-spacing:0.08px">EMEA</div><div class="t" style="left:421.7px;width:83.30000000000001px;overflow:hidden;top:391.4px;font-size:12px;font-weight:400;color:#000;letter-spacing:0.08px">Paseo</div><div class="t" style="left:511.6px;width:103.39999999999998px;overflow:hidden;top:391.4px;font-size:12px;font-weight:400;color:#000;letter-spacing:0.08px">None</div><div class="t" style="left:616px;width:87.60000000000002px;text-align:right;top:391.4px;font-size:12px;font-weight:400;color:#000;letter-spacing:0.08px">1006</div><div class="t" style="left:713.4px;width:193.60000000000002px;overflow:hidden;top:391.4px;font-size:12px;font-weight:400;color:#000;letter-spacing:0.08px">$</div><div class="a" style="left:0;top:404.6px;width:41px;height:18px;background:#fff"></div><div class="a" style="left:0;top:422.6px;width:41px;height:1px;background:#e1e1e1"></div><div class="t" style="left:0;width:41px;text-align:center;top:408.55px;font-size:9.5px;font-weight:400;color:#575757">22</div><div class="a" style="left:42px;top:404.6px;width:698.2px;height:18px;background:#dde8f5"></div><div class="a" style="left:41px;top:422.6px;width:699.2px;height:1px;background:#bac7d6"></div><div class="t" style="left:44.6px;width:99.4px;overflow:hidden;top:410.25px;font-size:12px;font-weight:400;color:#000;letter-spacing:0.08px">Channel Partners</div><div class="t" style="left:147.8px;width:138.2px;overflow:hidden;top:410.25px;font-size:12px;font-weight:400;color:#000;letter-spacing:0.08px">Germany</div><div class="t" style="left:292.85px;width:122.14999999999998px;overflow:hidden;top:410.25px;font-size:12px;font-weight:400;color:#000;letter-spacing:0.08px">EMEA</div><div class="t" style="left:421.7px;width:83.30000000000001px;overflow:hidden;top:410.25px;font-size:12px;font-weight:400;color:#000;letter-spacing:0.08px">Paseo</div><div class="t" style="left:511.6px;width:103.39999999999998px;overflow:hidden;top:410.25px;font-size:12px;font-weight:400;color:#000;letter-spacing:0.08px">None</div><div class="t" style="left:616px;width:87.60000000000002px;text-align:right;top:410.25px;font-size:12px;font-weight:400;color:#000;letter-spacing:0.08px">367</div><div class="t" style="left:713.4px;width:193.60000000000002px;overflow:hidden;top:410.25px;font-size:12px;font-weight:400;color:#000;letter-spacing:0.08px">$</div><div class="a" style="left:0;top:423.6px;width:41px;height:18px;background:#fff"></div><div class="a" style="left:0;top:441.6px;width:41px;height:1px;background:#e1e1e1"></div><div class="t" style="left:0;width:41px;text-align:center;top:427.55px;font-size:9.5px;font-weight:400;color:#575757">23</div><div class="a" style="left:42px;top:423.6px;width:698.2px;height:18px;background:#bdd5ed"></div><div class="a" style="left:41px;top:441.6px;width:699.2px;height:1px;background:#bac7d6"></div><div class="t" style="left:44.6px;width:99.4px;overflow:hidden;top:429.4px;font-size:12px;font-weight:400;color:#000;letter-spacing:0.08px">Government</div><div class="t" style="left:147.8px;width:138.2px;overflow:hidden;top:429.4px;font-size:12px;font-weight:400;color:#000;letter-spacing:0.08px">Mexico</div><div class="t" style="left:292.85px;width:122.14999999999998px;overflow:hidden;top:429.4px;font-size:12px;font-weight:400;color:#000;letter-spacing:0.08px">LATAM</div><div class="t" style="left:421.7px;width:83.30000000000001px;overflow:hidden;top:429.4px;font-size:12px;font-weight:400;color:#000;letter-spacing:0.08px">Paseo</div><div class="t" style="left:511.6px;width:103.39999999999998px;overflow:hidden;top:429.4px;font-size:12px;font-weight:400;color:#000;letter-spacing:0.08px">None</div><div class="t" style="left:616px;width:87.60000000000002px;text-align:right;top:429.4px;font-size:12px;font-weight:400;color:#000;letter-spacing:0.08px">883</div><div class="t" style="left:713.4px;width:193.60000000000002px;overflow:hidden;top:429.4px;font-size:12px;font-weight:400;color:#000;letter-spacing:0.08px">$</div><div class="a" style="left:0;top:442.6px;width:41px;height:18px;background:#fff"></div><div class="a" style="left:0;top:460.6px;width:41px;height:1px;background:#e1e1e1"></div><div class="t" style="left:0;width:41px;text-align:center;top:446.55px;font-size:9.5px;font-weight:400;color:#575757">24</div><div class="a" style="left:42px;top:442.6px;width:698.2px;height:18px;background:#dde8f5"></div><div class="a" style="left:41px;top:460.6px;width:699.2px;height:1px;background:#bac7d6"></div><div class="t" style="left:44.6px;width:99.4px;overflow:hidden;top:448.5px;font-size:12px;font-weight:400;color:#000;letter-spacing:0.08px">Midmarket</div><div class="t" style="left:147.8px;width:138.2px;overflow:hidden;top:448.5px;font-size:12px;font-weight:400;color:#000;letter-spacing:0.08px">France</div><div class="t" style="left:292.85px;width:122.14999999999998px;overflow:hidden;top:448.5px;font-size:12px;font-weight:400;color:#000;letter-spacing:0.08px">EMEA</div><div class="t" style="left:421.7px;width:83.30000000000001px;overflow:hidden;top:448.5px;font-size:12px;font-weight:400;color:#000;letter-spacing:0.08px">Paseo</div><div class="t" style="left:511.6px;width:103.39999999999998px;overflow:hidden;top:448.5px;font-size:12px;font-weight:400;color:#000;letter-spacing:0.08px">None</div><div class="t" style="left:616px;width:87.60000000000002px;text-align:right;top:448.5px;font-size:12px;font-weight:400;color:#000;letter-spacing:0.08px">549</div><div class="t" style="left:713.4px;width:193.60000000000002px;overflow:hidden;top:448.5px;font-size:12px;font-weight:400;color:#000;letter-spacing:0.08px">$</div><div class="a" style="left:0;top:461.6px;width:41px;height:18px;background:#fff"></div><div class="a" style="left:0;top:479.6px;width:41px;height:1px;background:#e1e1e1"></div><div class="t" style="left:0;width:41px;text-align:center;top:465.55px;font-size:9.5px;font-weight:400;color:#575757">25</div><div class="a" style="left:42px;top:461.6px;width:698.2px;height:18px;background:#bdd5ed"></div><div class="a" style="left:41px;top:479.6px;width:699.2px;height:1px;background:#bac7d6"></div><div class="t" style="left:44.6px;width:99.4px;overflow:hidden;top:467.85px;font-size:12px;font-weight:400;color:#000;letter-spacing:0.08px">Small Business</div><div class="t" style="left:147.8px;width:138.2px;overflow:hidden;top:467.85px;font-size:12px;font-weight:400;color:#000;letter-spacing:0.08px">Mexico</div><div class="t" style="left:292.85px;width:122.14999999999998px;overflow:hidden;top:467.85px;font-size:12px;font-weight:400;color:#000;letter-spacing:0.08px">LATAM</div><div class="t" style="left:421.7px;width:83.30000000000001px;overflow:hidden;top:467.85px;font-size:12px;font-weight:400;color:#000;letter-spacing:0.08px">Paseo</div><div class="t" style="left:511.6px;width:103.39999999999998px;overflow:hidden;top:467.85px;font-size:12px;font-weight:400;color:#000;letter-spacing:0.08px">None</div><div class="t" style="left:616px;width:87.60000000000002px;text-align:right;top:467.85px;font-size:12px;font-weight:400;color:#000;letter-spacing:0.08px">788</div><div class="t" style="left:713.4px;width:193.60000000000002px;overflow:hidden;top:467.85px;font-size:12px;font-weight:400;color:#000;letter-spacing:0.08px">$</div><div class="a" style="left:0;top:480.6px;width:41px;height:18px;background:#fff"></div><div class="a" style="left:0;top:498.6px;width:41px;height:1px;background:#e1e1e1"></div><div class="t" style="left:0;width:41px;text-align:center;top:484.55px;font-size:9.5px;font-weight:400;color:#575757">26</div><div class="a" style="left:42px;top:480.6px;width:698.2px;height:18px;background:#dde8f5"></div><div class="a" style="left:41px;top:498.6px;width:699.2px;height:1px;background:#bac7d6"></div><div class="t" style="left:44.6px;width:99.4px;overflow:hidden;top:486.7px;font-size:12px;font-weight:400;color:#000;letter-spacing:0.08px">Midmarket</div><div class="t" style="left:147.8px;width:138.2px;overflow:hidden;top:486.7px;font-size:12px;font-weight:400;color:#000;letter-spacing:0.08px">Mexico</div><div class="t" style="left:292.85px;width:122.14999999999998px;overflow:hidden;top:486.7px;font-size:12px;font-weight:400;color:#000;letter-spacing:0.08px">LATAM</div><div class="t" style="left:421.7px;width:83.30000000000001px;overflow:hidden;top:486.7px;font-size:12px;font-weight:400;color:#000;letter-spacing:0.08px">Paseo</div><div class="t" style="left:511.6px;width:103.39999999999998px;overflow:hidden;top:486.7px;font-size:12px;font-weight:400;color:#000;letter-spacing:0.08px">None</div><div class="t" style="left:616px;width:87.60000000000002px;text-align:right;top:486.7px;font-size:12px;font-weight:400;color:#000;letter-spacing:0.08px">2472</div><div class="t" style="left:713.4px;width:193.60000000000002px;overflow:hidden;top:486.7px;font-size:12px;font-weight:400;color:#000;letter-spacing:0.08px">$</div><div class="a" style="left:0;top:499.6px;width:41px;height:20px;background:#fff"></div><div class="a" style="left:0;top:519.6px;width:41px;height:1px;background:#e1e1e1"></div><div class="t" style="left:0;width:41px;text-align:center;top:504.55px;font-size:9.5px;font-weight:400;color:#575757">27</div><div class="a" style="left:42px;top:499.6px;width:698.2px;height:20px;background:#bdd5ed"></div><div class="a" style="left:41px;top:519.6px;width:699.2px;height:1px;background:#bac7d6"></div><div class="t" style="left:44.6px;width:99.4px;overflow:hidden;top:507.4px;font-size:12px;font-weight:400;color:#000;letter-spacing:0.08px">Government</div><div class="t" style="left:147.8px;width:138.2px;overflow:hidden;top:507.4px;font-size:12px;font-weight:400;color:#000;letter-spacing:0.08px">United States of America</div><div class="t" style="left:292.85px;width:122.14999999999998px;overflow:hidden;top:507.4px;font-size:12px;font-weight:400;color:#000;letter-spacing:0.08px">NA</div><div class="t" style="left:421.7px;width:83.30000000000001px;overflow:hidden;top:507.4px;font-size:12px;font-weight:400;color:#000;letter-spacing:0.08px">Paseo</div><div class="t" style="left:511.6px;width:103.39999999999998px;overflow:hidden;top:507.4px;font-size:12px;font-weight:400;color:#000;letter-spacing:0.08px">None</div><div class="t" style="left:616px;width:87.60000000000002px;text-align:right;top:507.4px;font-size:12px;font-weight:400;color:#000;letter-spacing:0.08px">1143</div><div class="t" style="left:713.4px;width:193.60000000000002px;overflow:hidden;top:507.4px;font-size:12px;font-weight:400;color:#000;letter-spacing:0.08px">$</div><div class="a" style="left:144px;top:21.6px;width:1px;height:600px;background:#bac7d6"></div><div class="a" style="left:286px;top:21.6px;width:1px;height:600px;background:#bac7d6"></div><div class="a" style="left:415px;top:21.6px;width:1px;height:600px;background:#bac7d6"></div><div class="a" style="left:505px;top:21.6px;width:1px;height:600px;background:#bac7d6"></div><div class="a" style="left:615px;top:21.6px;width:1px;height:600px;background:#bac7d6"></div><div class="a" style="left:706px;top:21.6px;width:1px;height:600px;background:#bac7d6"></div><div class="a" style="left:41px;top:1px;width:1px;height:600px;background:#c7c7c7"></div><div class="a" style="left:286.2px;top:39.6px;width:129.40000000000003px;height:19px;border:2px solid #1a73e8"></div><div class="a" style="left:410.40000000000003px;top:54.0px;width:9.4px;height:9.4px;border-radius:50%;background:#1a73e8;border:1.2px solid #fff"></div></div><div class="a" style="left:0;top:1px;width:41.5px;height:20.9px;background:#f8f9fa;border-right:4.3px solid #c9c9c9;border-bottom:4.2px solid #c9c9c9"></div><div class="a" style="left:740.2px;top:1px;width:10.799999999999955px;height:520.6px;background:#fff;border-left:1px solid #e8eaed"></div><div class="a" style="left:740.2px;top:1px;width:10.799999999999955px;height:20.6px;background:#f8f9fa;border-left:1px solid #e1e1e1;border-bottom:1px solid #c7c7c7"></div><div class="a" style="left:742px;top:23.8px;width:7.8px;height:22.8px;border-radius:4px;background:#dadce0"></div><div class="a" style="left:0;top:509.3px;width:740.2px;height:11.299999999999955px;background:#fff;border-top:1px solid #e8eaed"></div><div class="a" style="left:0;top:509.3px;width:42px;height:11.299999999999955px;background:#f8f9fa;border-right:1px solid #e1e1e1;border-top:1px solid #e8eaed"></div><div class="a" style="left:43.7px;top:511.3px;width:210.3px;height:7.7px;border-radius:4px;background:#dadce0"></div><div class="a" style="left:740.5px;top:480.6px;width:10.5px;height:15px;background:#f8f9fa;border:1px solid #e8eaed"></div><div class="a" style="left:740.5px;top:495.1px;width:10.5px;height:14.700000000000045px;background:#f8f9fa;border:1px solid #e8eaed"></div><div class="a" style="left:712.5px;top:509.4px;width:14.100000000000023px;height:11.200000000000045px;background:#f8f9fa;border:1px solid #e8eaed"></div><div class="a" style="left:726.2px;top:509.4px;width:14.599999999999909px;height:11.200000000000045px;background:#f8f9fa;border:1px solid #e8eaed"></div><div class="a" style="left:740.5px;top:509.4px;width:10.5px;height:11.200000000000045px;background:#f8f9fa;border:1px solid #e8eaed"></div><svg style="left:743px;top:485.9px" width="6" height="3.5" viewBox="0 0 10 5"><path fill="#9ea2a6" d="M0 5H10L5 0Z"/></svg><svg style="left:743px;top:500.1px" width="6" height="3.5" viewBox="0 0 10 5"><path fill="#9ea2a6" d="M0 0H10L5 5Z"/></svg><svg style="left:717px;top:512.9px" width="3.3" height="4.8" viewBox="0 0 5 10"><path fill="#9ea2a6" d="M5 0V10L0 5Z"/></svg><svg style="left:732.3px;top:512.9px" width="3.3" height="4.8" viewBox="0 0 5 10"><path fill="#9ea2a6" d="M0 0V10L5 5Z"/></svg></div><div class="a" style="left:0;top:648.6px;width:1024px;height:1px;background:#e1e3e6"></div><div class="a" style="left:0;top:649.6px;width:1024px;height:34px;background:#f9fbfd"></div><div class="a" style="left:51px;top:666.7px;width:9.6px;height:1.4px;background:#444746"></div><div class="a" style="left:55.1px;top:662.6px;width:1.4px;height:9.6px;background:#444746"></div><svg style="left:80px;top:655px" width="25" height="25" viewBox="80 655 25 25"><path stroke="#444746" stroke-width="1.35" d="M85.8 663.5H98.8M85.8 667.4H98.8M85.8 671.3H98.8"/></svg><div class="a" style="left:121.2px;top:649.6px;width:82.7px;height:34px;background:#e1e9f7"></div><div class="t" style="left:132.3px;top:661.2px;font-size:13px;letter-spacing:0.35px;font-weight:400;-webkit-text-stroke:0.45px #0b57d0;color:#0b57d0">Sheet1</div><svg style="left:186.2px;top:665px" width="6.5" height="3.5" viewBox="0 0 10 5"><path fill="#0b57d0" d="M0 0H10L5 5Z"/></svg><svg style="left:995.3px;top:663.5px" width="6" height="10" viewBox="0 0 6 10"><path fill="none" stroke="#444746" stroke-width="1.6" d="M5 1L1 5L5 9"/></svg><div class="a" style="left:751px;top:54.7px;width:273px;height:593.9px;background:#f1f3f4;border-left:1px solid #dadce0"></div><div class="a" style="left:751px;top:54.7px;width:273px;height:32px;background:#666"></div><div class="t" style="left:763.8px;top:65.5px;font-size:11.5px;font-weight:400;color:#fff;-webkit-text-stroke:0.6px #fff">Henry</div><svg style="left:1002.3px;top:65.8px" width="10.5" height="10.5" viewBox="0 0 10 10"><path stroke="#fff" stroke-width="1.5" d="M0.5 0.5L9.5 9.5M9.5 0.5L0.5 9.5"/></svg><div class="t" style="left:766px;top:92px;font-size:12.5px;color:#1f1f1f">Adrien Baudhuin</div><div class="t" style="left:766px;top:109px;font-size:10.8px;color:#5f6b7a">Used 343 extra credits</div><div class="a" style="left:995.2px;top:97.9px;width:3.2px;height:3.2px;border-radius:50%;background:#5b6572"></div><div class="a" style="left:995.2px;top:103.2px;width:3.2px;height:3.2px;border-radius:50%;background:#5b6572"></div><div class="a" style="left:995.2px;top:108.5px;width:3.2px;height:3.2px;border-radius:50%;background:#5b6572"></div><div class="a" style="left:752px;top:125.6px;width:272px;height:1px;background:#d5d9de"></div><div class="a" style="left:752px;top:126.6px;width:272px;height:422.9px;overflow:hidden"><div class="a" style="left:261.3px;top:0.0px;width:10.7px;height:430px;background:#f0f0f0"></div><svg style="left:263.2px;top:4.9px" width="7" height="4" viewBox="0 0 10 5"><path fill="#505050" d="M0 5H10L5 0Z"/></svg><div class="a" style="left:262.4px;top:97.2px;width:8.5px;height:292px;background:#c1c1c1"></div><div class="t" style="left:14px;top:0.3px;font-size:13px;font-weight:400;color:#1f1f1f;-webkit-text-stroke:0.42px #1f1f1f">Classify column:</div><div class="a" style="left:14.2px;top:18.9px;width:232.2px;height:32.3px;border:1px solid #a9c0da;border-radius:6px"></div><div class="t" style="left:29.5px;top:29.9px;font-size:12.2px;color:#9aa0a6">B - Country</div><svg style="left:234.5px;top:33.4px" width="8" height="4.5" viewBox="0 0 8 4.5"><path fill="none" stroke="#80868b" stroke-width="1.1" d="M0.5 0.5L4 4L7.5 0.5"/></svg><div class="t" style="left:14px;top:65.3px;font-size:13px;font-weight:400;color:#1f1f1f;-webkit-text-stroke:0.42px #1f1f1f">Into one of:</div><div class="a" style="left:14.3px;top:84.4px;width:232px;height:142.5px;border:1.2px solid #6f8fb5;border-radius:4px"></div><div class="a" style="left:22.4px;top:92.3px;width:55.60000000000002px;height:29px;border-radius:4px;background:#d9e7fc"></div><div class="t" style="left:29.5px;top:100.6px;font-size:14px;color:#1f1f1f;letter-spacing:-0.2px">SEA</div><svg style="left:63.7px;top:104.7px" width="6.5" height="6.5" viewBox="0 0 10 10"><path stroke="#2f80ed" stroke-width="1.8" d="M1 1L9 9M9 1L1 9"/></svg><div class="a" style="left:85.7px;top:92.3px;width:67.29999999999995px;height:29px;border-radius:4px;background:#d9e7fc"></div><div class="t" style="left:92.8px;top:100.6px;font-size:14px;color:#1f1f1f;letter-spacing:-0.2px">EMEA</div><svg style="left:138.7px;top:104.7px" width="6.5" height="6.5" viewBox="0 0 10 10"><path stroke="#2f80ed" stroke-width="1.8" d="M1 1L9 9M9 1L1 9"/></svg><div class="a" style="left:161px;top:92.3px;width:49px;height:29px;border-radius:4px;background:#d9e7fc"></div><div class="t" style="left:168.1px;top:100.6px;font-size:14px;color:#1f1f1f;letter-spacing:0">NA</div><svg style="left:195.7px;top:104.7px" width="6.5" height="6.5" viewBox="0 0 10 10"><path stroke="#2f80ed" stroke-width="1.8" d="M1 1L9 9M9 1L1 9"/></svg><div class="a" style="left:22.4px;top:128.6px;width:66.30000000000007px;height:29px;border-radius:4px;background:#d9e7fc"></div><div class="t" style="left:29.5px;top:136.9px;font-size:14px;color:#1f1f1f;letter-spacing:0">APAC</div><svg style="left:74.4px;top:141.0px" width="6.5" height="6.5" viewBox="0 0 10 10"><path stroke="#2f80ed" stroke-width="1.8" d="M1 1L9 9M9 1L1 9"/></svg><div class="a" style="left:96.2px;top:128.6px;width:75.59999999999991px;height:29px;border-radius:4px;background:#d9e7fc"></div><div class="t" style="left:103.3px;top:136.9px;font-size:14px;color:#1f1f1f;letter-spacing:0.9px">LATAM</div><svg style="left:157.5px;top:141.0px" width="6.5" height="6.5" viewBox="0 0 10 10"><path stroke="#2f80ed" stroke-width="1.8" d="M1 1L9 9M9 1L1 9"/></svg><div class="a" style="left:22.6px;top:164.9px;width:59.39999999999998px;height:29px;border-radius:4px;background:#d9e7fc"></div><div class="t" style="left:29.7px;top:173.2px;font-size:14px;color:#1f1f1f;letter-spacing:0">MEA</div><svg style="left:67.7px;top:177.3px" width="6.5" height="6.5" viewBox="0 0 10 10"><path stroke="#2f80ed" stroke-width="1.8" d="M1 1L9 9M9 1L1 9"/></svg><div class="a" style="left:89.8px;top:164.9px;width:51.200000000000045px;height:29px;border-radius:4px;background:#d9e7fc"></div><div class="t" style="left:96.9px;top:173.2px;font-size:14px;color:#1f1f1f;letter-spacing:0">CIS</div><svg style="left:126.7px;top:177.3px" width="6.5" height="6.5" viewBox="0 0 10 10"><path stroke="#2f80ed" stroke-width="1.8" d="M1 1L9 9M9 1L1 9"/></svg><div class="t" style="left:26.5px;top:204.4px;font-size:12.6px;color:#a0a6ad">Type a category and press comma...</div><div class="t" style="left:14px;top:242.0px;font-size:13px;font-weight:400;color:#1f1f1f;-webkit-text-stroke:0.42px #1f1f1f">Write to column:</div><div class="a" style="left:14.2px;top:260.7px;width:232.2px;height:32.3px;border:1px solid #a9c0da;border-radius:6px"></div><div class="t" style="left:29.5px;top:271.7px;font-size:12.5px;color:#9aa0a6">C - Business region</div><svg style="left:234.5px;top:275.2px" width="8" height="4.5" viewBox="0 0 8 4.5"><path fill="none" stroke="#80868b" stroke-width="1.1" d="M0.5 0.5L4 4L7.5 0.5"/></svg><div class="a" style="left:14px;top:307.4px;width:232.5px;height:32.7px;border:1.75px solid #4f82c6;border-radius:6px;background:#fff"></div><div class="t" style="left:14px;top:316.0px;width:232.5px;text-align:center;font-size:13px;font-weight:400;color:#1f1f1f;-webkit-text-stroke:0.42px #1f1f1f">Stop</div><div class="t" style="left:14px;top:349.4px;width:232.5px;text-align:center;font-size:11px;color:#6b7785">Do not close while running</div><div class="a" style="left:14.1px;top:376.9px;width:232px;height:80px;border:1px solid #e2e5e9;border-radius:8px"></div><div class="t" style="left:22px;top:389.4px;font-size:14.8px;color:#1f1f1f">Progress: 316/700</div><div class="a" style="left:22.2px;top:413.7px;width:215.8px;height:7.5px;border-radius:4px;background:#dde9f8"></div><div class="a" style="left:22.2px;top:413.7px;width:98px;height:7.5px;border-radius:4px 0 0 4px;background:#92c1f8"></div></div><div class="a" style="left:752px;top:549.3px;width:272px;height:99.5px;background:#fff;border:1px solid #dfe3e8;border-bottom:none;border-radius:8px 8px 0 0"></div><div class="t" style="left:767.3px;top:563.9px;font-size:14px;font-weight:400;color:#1f1f1f;-webkit-text-stroke:0.42px #1f1f1f">Chat</div><svg style="left:990px;top:567px" width="12" height="7" viewBox="0 0 12 7"><path fill="none" stroke="#1f1f1f" stroke-width="1.8" d="M1 6.2L6 1.3L11 6.2"/></svg><div class="a" style="left:766.4px;top:589.2px;width:243.8px;height:24.8px;border:1px solid #3e4a5a;border-radius:13px;background:#fff;box-shadow:0 1px 1px rgba(60,64,67,0.35)"></div><svg style="left:765px;top:585px" width="30" height="30" viewBox="765 585 30 30"><path fill="none" stroke="#8a96a3" stroke-width="1.25" stroke-linejoin="round" d="M781.3 597Q782 601.6 786.3 602.3Q782 603 781.3 607.6Q780.6 603 776.3 602.3Q780.6 601.6 781.3 597Z"/><path stroke="#8a96a3" stroke-width="1.1" d="M776.8 594.9V599.1M774.7 597H778.9"/><circle cx="785.4" cy="606.4" r="1.35" fill="#8a96a3"/></svg><div class="t" style="left:796.3px;top:597px;font-size:12.6px;color:#9aa5b1">Ask, chat, work with AI...</div><svg style="left:870px;top:612px" width="36" height="36" viewBox="870 612 36 36"><circle cx="887.9" cy="630.2" r="7.6" fill="none" stroke="#9aa5b1" stroke-width="1.35"/><path fill="#9aa5b1" d="M882.5 625.2Q886 627.2 889.5 624.6Q890.5 626.8 893.2 627Q892.5 624.2 889.6 622.9Q885.3 622 882.5 625.2Z"/><circle cx="884.9" cy="629.6" r="0.95" fill="#9aa5b1"/><circle cx="890.9" cy="629.6" r="0.95" fill="#9aa5b1"/><path fill="none" stroke="#9aa5b1" stroke-width="1.2" stroke-linecap="round" d="M885.3 633Q887.9 634.8 890.5 633"/></svg></body></html>
